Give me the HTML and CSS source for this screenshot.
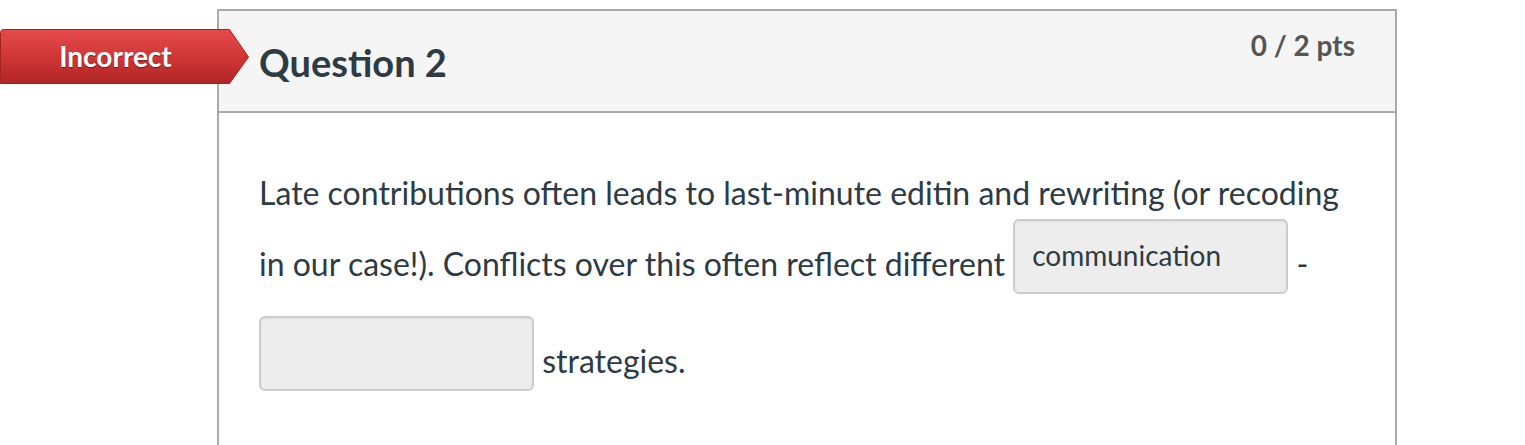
FILE: index.html
```html
<!DOCTYPE html>
<html lang="en">
<head>
<meta charset="utf-8">
<title>Question 2</title>
<link rel="stylesheet" href="styles.css">
</head>
<body>
<div class="card">
  <div class="badge">
    <svg class="badge-shape" width="250" height="56" viewBox="0 0 250 56" aria-hidden="true">
      <defs>
        <linearGradient id="red" x1="0" y1="0" x2="0" y2="1">
          <stop offset="0" stop-color="#e54b4b"/>
          <stop offset="0.5" stop-color="#d13737"/>
          <stop offset="1" stop-color="#b02424"/>
        </linearGradient>
      </defs>
      <path d="M0.5 3.5 Q0.5 0.5 3.5 0.5 H229.5 L248.5 28 L229.5 54.5 H0.5 Z" fill="url(#red)" stroke="#a52222" stroke-width="1"/>
    </svg>
    <span class="badge-text">Incorrect</span>
  </div>
  <div class="header">
    <h2 class="title">Question 2</h2>
    <span class="pts">0 / 2 pts</span>
  </div>
  <div class="body">
    <p class="qtext">Late contributions often leads to last-minute editin and rewriting (or recoding in our case!). Conflicts over this often reflect different <span class="blank">communication</span> - <span class="blank"></span> strategies.</p>
  </div>
</div>
</body>
</html>
```
FILE: styles.css
```css
html, body {
  margin: 0;
  padding: 0;
  background: #ffffff;
}
body {
  font-family: Lato, "Noto Sans", sans-serif;
  color: #2d3b45;
  overflow: hidden;
}
.card {
  position: relative;
  box-sizing: border-box;
  width: 1180px;
  min-height: 520px;
  margin: 9px 0 0 217px;
  border: 2px solid #aaaaaa;
  border-bottom: none;
}
.badge {
  position: absolute;
  left: -219px;
  top: 18px;
  width: 250px;
  height: 56px;
  display: flex;
  align-items: center;
}
.badge-shape {
  position: absolute;
  left: 0;
  top: 0;
}
.badge-text {
  position: relative;
  width: 231px;
  text-align: center;
  color: #ffffff;
  font-weight: 700;
  font-size: 28px;
  line-height: 1;
  margin-top: -3px;
  text-shadow: 0 1px 1px rgba(0, 0, 0, 0.45);
}
.header {
  box-sizing: border-box;
  height: 102px;
  display: flex;
  justify-content: space-between;
  align-items: flex-start;
  padding: 18px 40px 0 40px;
  background: #f5f5f5;
  border-bottom: 2px solid #aaaaaa;
}
.title {
  margin: 11px 0 0 0;
  font-size: 38px;
  line-height: 1.2;
  font-weight: 700;
  color: #2d3b45;
}
.pts {
  font-size: 28px;
  line-height: 1.2;
  font-weight: 700;
  color: #555555;
}
.body {
  padding: 53px 40px 0 40px;
}
.qtext {
  margin: 0;
  font-size: 32px;
  line-height: 53px;
}
.blank {
  display: inline-block;
  box-sizing: border-box;
  width: 275px;
  height: 75px;
  margin: 0 0 22px 0;
  padding: 17px 17px 0 17px;
  vertical-align: middle;
  background: #ededed;
  border: 2px solid #cccccc;
  border-radius: 6px;
  box-shadow: inset 0 1px 2px rgba(0, 0, 0, 0.06);
  font-size: 28px;
  line-height: 34px;
  color: #2d3b45;
}
```
